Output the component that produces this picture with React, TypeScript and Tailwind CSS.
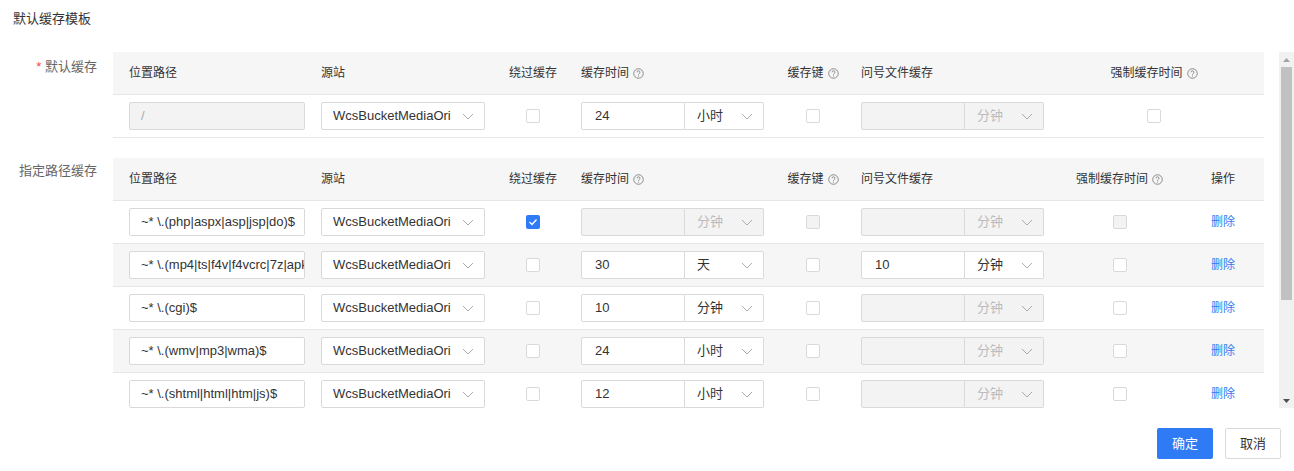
import React from "react";

const F = { fontFamily: '"Liberation Sans", "Noto Sans CJK SC", sans-serif' };

const Q = () => (
  <svg width="11" height="11" viewBox="0 0 12 12" className="ml-1 inline-block">
    <circle cx="6" cy="6" r="5.2" fill="none" stroke="#777" strokeWidth="0.9" />
    <path d="M4.4 4.7a1.6 1.6 0 1 1 2.3 1.4c-.5.3-.7.5-.7 1.1" fill="none" stroke="#777" strokeWidth="0.9" />
    <circle cx="6" cy="8.7" r="0.6" fill="#777" />
  </svg>
);

const Chevron = ({ c = "#aaa" }: { c?: string }) => (
  <svg width="12" height="7" viewBox="0 0 12 7"><path d="M1 1l5 5 5-5" fill="none" stroke={c} strokeWidth="1" /></svg>
);

const Cb = ({ checked, disabled }: { checked?: boolean; disabled?: boolean }) =>
  checked ? (
    <div className="w-[14px] h-[14px] rounded-[2px] bg-[#2f7bf5] flex items-center justify-center">
      <svg width="10" height="8" viewBox="0 0 10 8"><path d="M1.5 4l2.5 2.5 4.5-5" fill="none" stroke="#fff" strokeWidth="1.3" /></svg>
    </div>
  ) : (
    <div className={`w-[14px] h-[14px] rounded-[2px] border border-[#d9d9d9] ${disabled ? "bg-[#f3f3f3]" : "bg-white"}`} />
  );

const TextIn = ({ v, disabled, w }: { v: string; disabled?: boolean; w: string }) => (
  <div className={`${w} h-[28px] border border-[#d9d9d9] rounded-[2px] px-[11px] flex items-center text-[13px] overflow-hidden whitespace-nowrap ${disabled ? "bg-[#f3f3f3] text-[#aaa]" : "bg-white text-[#333]"}`}>{v}</div>
);

const Sel = ({ v, disabled, w }: { v: string; disabled?: boolean; w: string }) => (
  <div className={`${w} h-[28px] border border-[#d9d9d9] rounded-[2px] pl-[11px] pr-[10px] flex items-center justify-between text-[13px] whitespace-nowrap overflow-hidden ${disabled ? "bg-[#f3f3f3] text-[#bbb]" : "bg-white text-[#333]"}`}>
    <span className="overflow-hidden">{v}</span><Chevron />
  </div>
);

const Combo = ({ n, u, disabled }: { n: string; u: string; disabled?: boolean }) => (
  <div className="flex">
    <div className={`w-[104px] h-[28px] border border-[#d9d9d9] rounded-l-[2px] px-[13px] flex items-center text-[13px] ${disabled ? "bg-[#f3f3f3]" : "bg-white text-[#333]"}`}>{n}</div>
    <div className={`w-[79px] h-[28px] border border-l-0 border-[#d9d9d9] rounded-r-[2px] pl-[12px] pr-[10px] flex items-center justify-between text-[13px] ${disabled ? "bg-[#f3f3f3] text-[#bbb]" : "bg-white text-[#333]"}`}>
      <span>{u}</span><Chevron />
    </div>
  </div>
);

const Header = ({ op }: { op?: boolean }) => (
  <div className="flex items-center h-[43px] bg-[#f6f6f6] border-b border-[#e6e6e6] text-[12px] text-[#333]">
    <div className="w-[208px] pl-[16px]">位置路径</div>
    <div className="w-[176px]">源站</div>
    <div className="w-[72px] text-center">绕过缓存</div>
    <div className="w-[12px]" />
    <div className="w-[196px] flex items-center">缓存时间<Q /></div>
    <div className="w-[72px] flex items-center justify-center">缓存键<Q /></div>
    <div className="w-[12px]" />
    <div className="w-[183px]">问号文件缓存</div>
    {op ? (
      <>
        <div className="w-[151px] flex items-center justify-center">强制缓存时间<Q /></div>
        <div className="pl-[16px]">操作</div>
      </>
    ) : (
      <div className="flex-1 flex items-center justify-center">强制缓存时间<Q /></div>
    )}
  </div>
);

type R = { path: string; pathDis?: boolean; bypass?: boolean; n: string; u: string; tDis?: boolean; key?: boolean; keyDis?: boolean; qn: string; qDis?: boolean; op?: boolean; gray?: boolean; forceDis?: boolean };

const Row = (r: R) => (
  <div className={`flex items-center h-[43px] border-b border-[#e6e6e6] ${r.gray ? "bg-[#f6f6f6]" : "bg-white"}`}>
    <div className="w-[208px] pl-[16px]"><TextIn v={r.path} disabled={r.pathDis} w="w-[176px]" /></div>
    <div className="w-[176px]"><Sel v="WcsBucketMediaOri" w="w-[164px]" /></div>
    <div className="w-[72px] flex justify-center"><Cb checked={r.bypass} /></div>
    <div className="w-[12px]" />
    <div className="w-[196px]"><Combo n={r.n} u={r.u} disabled={r.tDis} /></div>
    <div className="w-[72px] flex justify-center"><Cb checked={r.key} disabled={r.keyDis} /></div>
    <div className="w-[12px]" />
    <div className="w-[183px]"><Combo n={r.qn} u="分钟" disabled={r.qDis} /></div>
    {r.op ? (
      <>
        <div className="w-[151px] flex justify-center"><Cb disabled={r.forceDis} /></div>
        <div className="pl-[16px] text-[12px] text-[#2f7bf5]">删除</div>
      </>
    ) : (
      <div className="flex-1 flex justify-center"><Cb /></div>
    )}
  </div>
);

const Scrollbar = () => (
  <div className="w-[15px] h-full bg-[#f1f1f1] flex flex-col items-center">
    <div className="h-[15px] flex items-center justify-center">
      <svg width="7" height="4" viewBox="0 0 7 4"><path d="M0 4L3.5 0 7 4z" fill="#a3a3a3" /></svg>
    </div>
    <div className="w-[11px] h-[233px] bg-[#c1c1c1]" />
    <div className="flex-1" />
    <div className="h-[15px] flex items-center justify-center">
      <svg width="7" height="4" viewBox="0 0 7 4"><path d="M0 0L3.5 4 7 0z" fill="#505050" /></svg>
    </div>
  </div>
);

export default function App() {
  const rows: R[] = [
    { path: "~* \\.(php|aspx|asp|jsp|do)$", bypass: true, n: "", u: "分钟", tDis: true, keyDis: true, qn: "", qDis: true },
    { path: "~* \\.(mp4|ts|f4v|f4vcrc|7z|apk)", n: "30", u: "天", key: true, qn: "10", gray: true },
    { path: "~* \\.(cgi)$", n: "10", u: "分钟", qn: "", qDis: true },
    { path: "~* \\.(wmv|mp3|wma)$", n: "24", u: "小时", qn: "", qDis: true, gray: true },
    { path: "~* \\.(shtml|html|htm|js)$", n: "12", u: "小时", qn: "", qDis: true },
  ];
  return (
    <div className="w-[1294px] h-[471px] bg-white" style={F}>
      <div className="h-[52px] pl-[13px] pt-[9px] text-[13px] text-[#333]">默认缓存模板</div>
      <div className="h-[356px] flex">
        <div className="w-[1279px] overflow-hidden">
          <div className="flex">
            <div className="w-[113px] pr-[16px] pt-[5px] text-right text-[13px] text-[#666]"><span className="text-[#f5484d]">* </span>默认缓存</div>
            <div className="w-[1151px]">
              <Header />
              <Row path="/" pathDis n="24" u="小时" qn="" qDis />
            </div>
          </div>
          <div className="flex mt-[20px]">
            <div className="w-[113px] pr-[16px] pt-[3px] text-right text-[13px] text-[#666]">指定路径缓存</div>
            <div className="w-[1151px]">
              <Header op />
              {rows.map((r, i) => <Row key={i} {...r} op forceDis={i === 0} />)}
            </div>
          </div>
        </div>
        <Scrollbar />
      </div>
      <div className="flex justify-end gap-[12px] pr-[13px] pt-[20px]">
        <div className="w-[56px] h-[31px] rounded-[2px] bg-[#2f7bf5] text-white text-[13px] flex items-center justify-center">确定</div>
        <div className="w-[56px] h-[31px] rounded-[2px] border border-[#d9d9d9] text-[#333] text-[13px] flex items-center justify-center">取消</div>
      </div>
    </div>
  );
}
